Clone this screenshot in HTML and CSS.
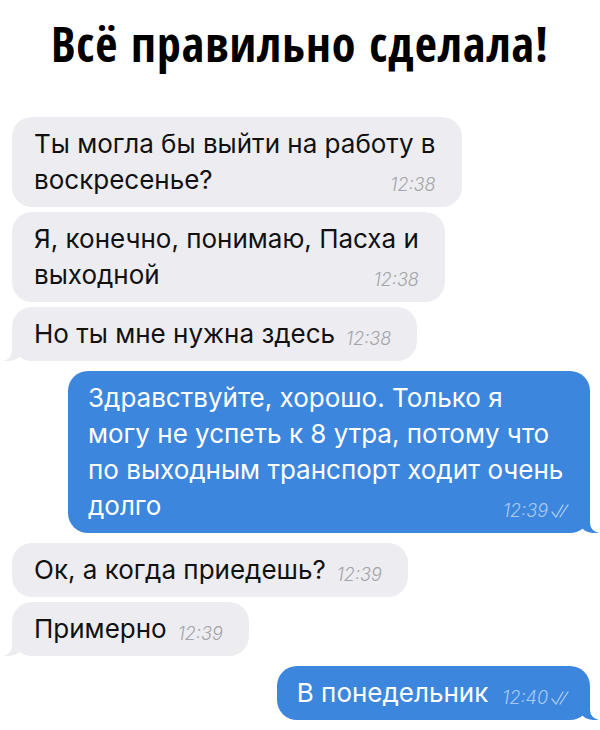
FILE: index.html
```html
<!DOCTYPE html>
<html>
<head>
    <meta charset="UTF-8">
    <title>Всё правильно сделала!</title>
    <link rel="stylesheet" href="styles.css">
</head>
<body>
    <h1 class="title">Всё правильно сделала!</h1>

    <div class="chat">
        <div class="group">
            <div class="msg in">Ты могла бы выйти на работу в<br>воскресенье?<span class="time">12:38</span></div>
            <div class="msg in">Я, конечно, понимаю, Пасха и<br>выходной<span class="time">12:38</span></div>
            <div class="msg in tail">Но ты мне нужна здесь<span class="time">12:38</span></div>
        </div>

        <div class="group">
            <div class="msg out tail wide">Здравствуйте, хорошо. Только я<br>могу не успеть к 8 утра, потому что<br>по выходным транспорт ходит очень<br>долго<span class="time">12:39<svg class="ticks" viewBox="0 0 22 14" width="22" height="14"><path d="M1 8l4 5L12 1M9 13L17 1" fill="none" stroke="currentColor" stroke-width="1.3" stroke-linecap="round"/></svg></span></div>
        </div>

        <div class="group">
            <div class="msg in">Ок, а когда приедешь?<span class="time">12:39</span></div>
            <div class="msg in tail">Примерно<span class="time">12:39</span></div>
        </div>

        <div class="group">
            <div class="msg out tail">В понедельник<span class="time">12:40<svg class="ticks" viewBox="0 0 22 14" width="22" height="14"><path d="M1 8l4 5L12 1M9 13L17 1" fill="none" stroke="currentColor" stroke-width="1.3" stroke-linecap="round"/></svg></span></div>
        </div>
    </div>
</body>
</html>
```

FILE: styles.css
```css
body {
    margin: 0;
    background: #ffffff;
    font-family: "Inter", "Roboto", sans-serif;
    color: #000;
}
.title {
    margin: 0;
    padding: 16px 0 0;
    height: 95px;
    box-sizing: border-box;
    text-align: center;
    font-family: "Open Sans Condensed", "Open Sans", sans-serif;
    font-weight: 800;
    font-size: 48px;
    line-height: 56px;
    letter-spacing: 1px;
}
.chat {
    display: flex;
    flex-direction: column;
    gap: 10px;
    padding: 22px 10px 0 12px;
}
.group {
    display: flex;
    flex-direction: column;
    gap: 5px;
}
.msg {
    position: relative;
    box-sizing: border-box;
    max-width: 100%;
    padding: 9px 26px 9px 22px;
    border-radius: 20px;
    font-size: 26px;
    line-height: 36px;
    color: #111;
}
.in {
    align-self: flex-start;
    background: #ededf1;
}
.out {
    align-self: flex-end;
    background: #3d86de;
    color: #ffffff;
    padding: 9px 17px 9px 20px;
}
.wide {
    align-self: stretch;
    margin-left: 56px;
}
.time {
    float: right;
    margin: 13px 0 0 11px;
    font-size: 18px;
    line-height: 20px;
    font-style: italic;
    font-weight: 300;
    color: #a4a4aa;
}
.out .time {
    margin-left: 14px;
    color: #a9cbf3;
}
.ticks {
    margin-left: 3px;
    vertical-align: -1px;
}
.tail::before {
    content: "";
    position: absolute;
    bottom: 0;
    height: 20px;
    width: 20px;
}
.tail::after {
    content: "";
    position: absolute;
    bottom: 0;
    width: 10px;
    height: 20px;
    background: #ffffff;
}
.in.tail::before {
    left: -8px;
    background: #ededf1;
    border-bottom-right-radius: 15px;
}
.in.tail::after {
    left: -10px;
    border-bottom-right-radius: 10px;
}
.out.tail::before {
    right: -8px;
    background: #3d86de;
    border-bottom-left-radius: 15px;
}
.out.tail::after {
    right: -10px;
    border-bottom-left-radius: 10px;
}
```
